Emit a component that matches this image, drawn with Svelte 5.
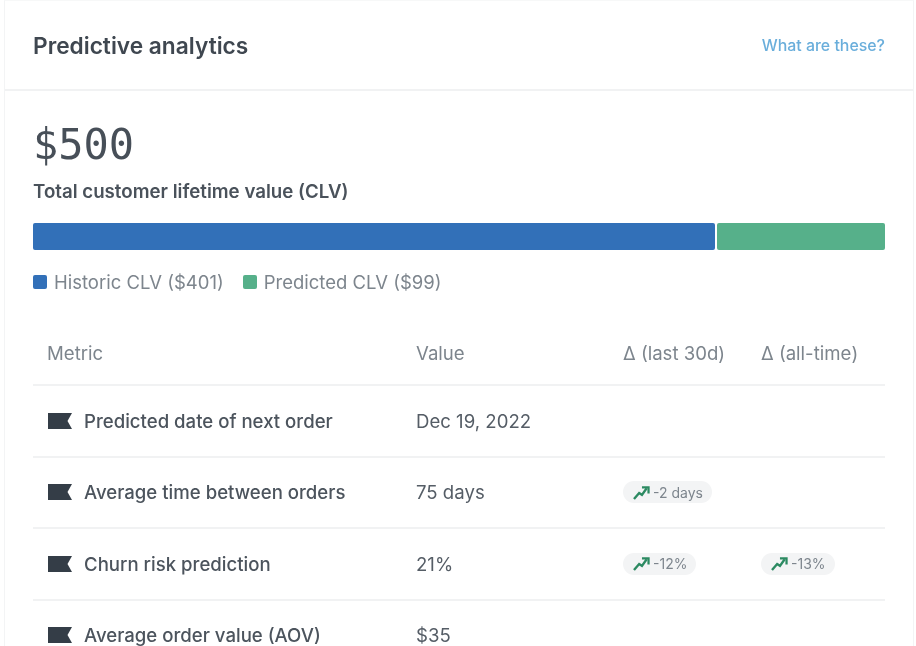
<script lang="ts">
  const rows = [
    { metric: 'Predicted date of next order', value: 'Dec 19, 2022', last: '', all: '' },
    { metric: 'Average time between orders', value: '75 days', last: '-2 days', all: '' },
    { metric: 'Churn risk prediction', value: '21%', last: '-12%', all: '-13%' },
    { metric: 'Average order value (AOV)', value: '$35', last: '', all: '' }
  ];
</script>

{#snippet delta(text: string)}
  <span class="delta">
    <svg width="17" height="15" viewBox="0 0 18 16" fill="none" stroke="#2c8a62" stroke-width="2.5">
      <path d="M1 15 L6.5 8.5 L9.5 10.5 L14.5 3.5" />
      <path d="M9.5 2.5 H16.5 V9" stroke-width="2.4" />
    </svg>
    {text}
  </span>
{/snippet}

<div class="card">
  <header class="card-head">
    <h2>Predictive analytics</h2>
    <span class="help">What are these?</span>
  </header>
  <section class="card-body">
    <div class="total">$500</div>
    <div class="total-label">Total customer lifetime value (CLV)</div>
    <div class="bar">
      <div class="seg historic"></div>
      <div class="seg predicted"></div>
    </div>
    <div class="legend">
      <span class="legend-item"><i class="dot historic"></i>Historic CLV ($401)</span>
      <span class="legend-item"><i class="dot predicted"></i>Predicted CLV ($99)</span>
    </div>
    <div class="metrics">
      <div class="row head">
        <span>Metric</span>
        <span>Value</span>
        <span>Δ (last 30d)</span>
        <span>Δ (all-time)</span>
      </div>
      {#each rows as row (row.metric)}
        <div class="row">
          <span class="metric">
            <svg class="flag" width="24" height="16" viewBox="0 0 24 16">
              <path d="M0 0 H24 L19.5 8 L24 16 H0 Z" fill="#343d47" />
            </svg>
            {row.metric}
          </span>
          <span>{row.value}</span>
          <span>{#if row.last}{@render delta(row.last)}{/if}</span>
          <span>{#if row.all}{@render delta(row.all)}{/if}</span>
        </div>
      {/each}
    </div>
  </section>
</div>

<style>
  :global(body) {
    background: #fff;
    overflow: hidden;
  }
  .card {
    width: 910px;
    height: 646px;
    margin-left: 4px;
    box-sizing: border-box;
    border-left: 1px solid #f3f4f5;
    border-right: 1px solid #f3f4f5;
    border-top: 1px solid #f7f8f8;
    background: #fff;
    font-family: Inter, 'Noto Sans', sans-serif;
    color: #4a525b;
    overflow: hidden;
    filter: blur(0.45px);
  }
  .card-head {
    display: flex;
    align-items: center;
    justify-content: space-between;
    height: 90px;
    padding: 0 28px;
    border-bottom: 2px solid #f1f2f3;
    box-sizing: border-box;
  }
  h2 {
    margin: 0;
    font-size: 22.7px;
    font-weight: 600;
    color: #3f4750;
  }
  .help {
    font-size: 15.9px;
    font-weight: 500;
    color: #6aaedb;
  }
  .card-body {
    padding: 32px 28px 0;
  }
  .total {
    font-family: 'DejaVu Sans Mono', monospace;
    font-size: 42px;
    line-height: 44px;
    color: #474f58;
  }
  .total-label {
    margin-top: 14px;
    font-size: 18.7px;
    line-height: 22px;
    font-weight: 600;
    color: #4a525b;
  }
  .bar {
    display: flex;
    gap: 2px;
    height: 27px;
    margin-top: 20px;
  }
  .seg {
    border-radius: 2px;
  }
  .seg.historic {
    width: 682px;
  }
  .seg.predicted {
    flex: 1;
  }
  .historic {
    background: #3270b8;
  }
  .predicted {
    background: #56b08a;
  }
  .legend {
    display: flex;
    gap: 19px;
    margin-top: 21px;
    font-size: 18.5px;
    line-height: 22px;
    color: #7d858d;
  }
  .legend-item {
    display: flex;
    align-items: center;
    gap: 7px;
  }
  .dot {
    width: 14px;
    height: 14px;
    border-radius: 2px;
  }
  .metrics {
    width: 852px;
    margin-top: 29px;
    font-size: 18.6px;
    color: #555d66;
  }
  .row {
    display: grid;
    grid-template-columns: 369px 207px 138px 138px;
    align-items: center;
    height: 71.5px;
    border-bottom: 2px solid #f1f2f3;
    box-sizing: border-box;
  }
  .row.head {
    height: 64px;
    color: #7d858d;
  }
  .row > span {
    display: flex;
    align-items: center;
    padding-left: 14px;
  }
  .metric {
    gap: 12px;
    font-weight: 500;
    color: #4c545d;
  }
  .flag {
    flex: none;
    margin-left: 1px;
  }
  .delta {
    display: inline-flex;
    align-items: center;
    gap: 3px;
    height: 22px;
    padding: 0 9px 0 10px;
    border-radius: 11px;
    background: #f3f4f5;
    font-size: 14px;
    color: #7d858d;
  }
</style>
